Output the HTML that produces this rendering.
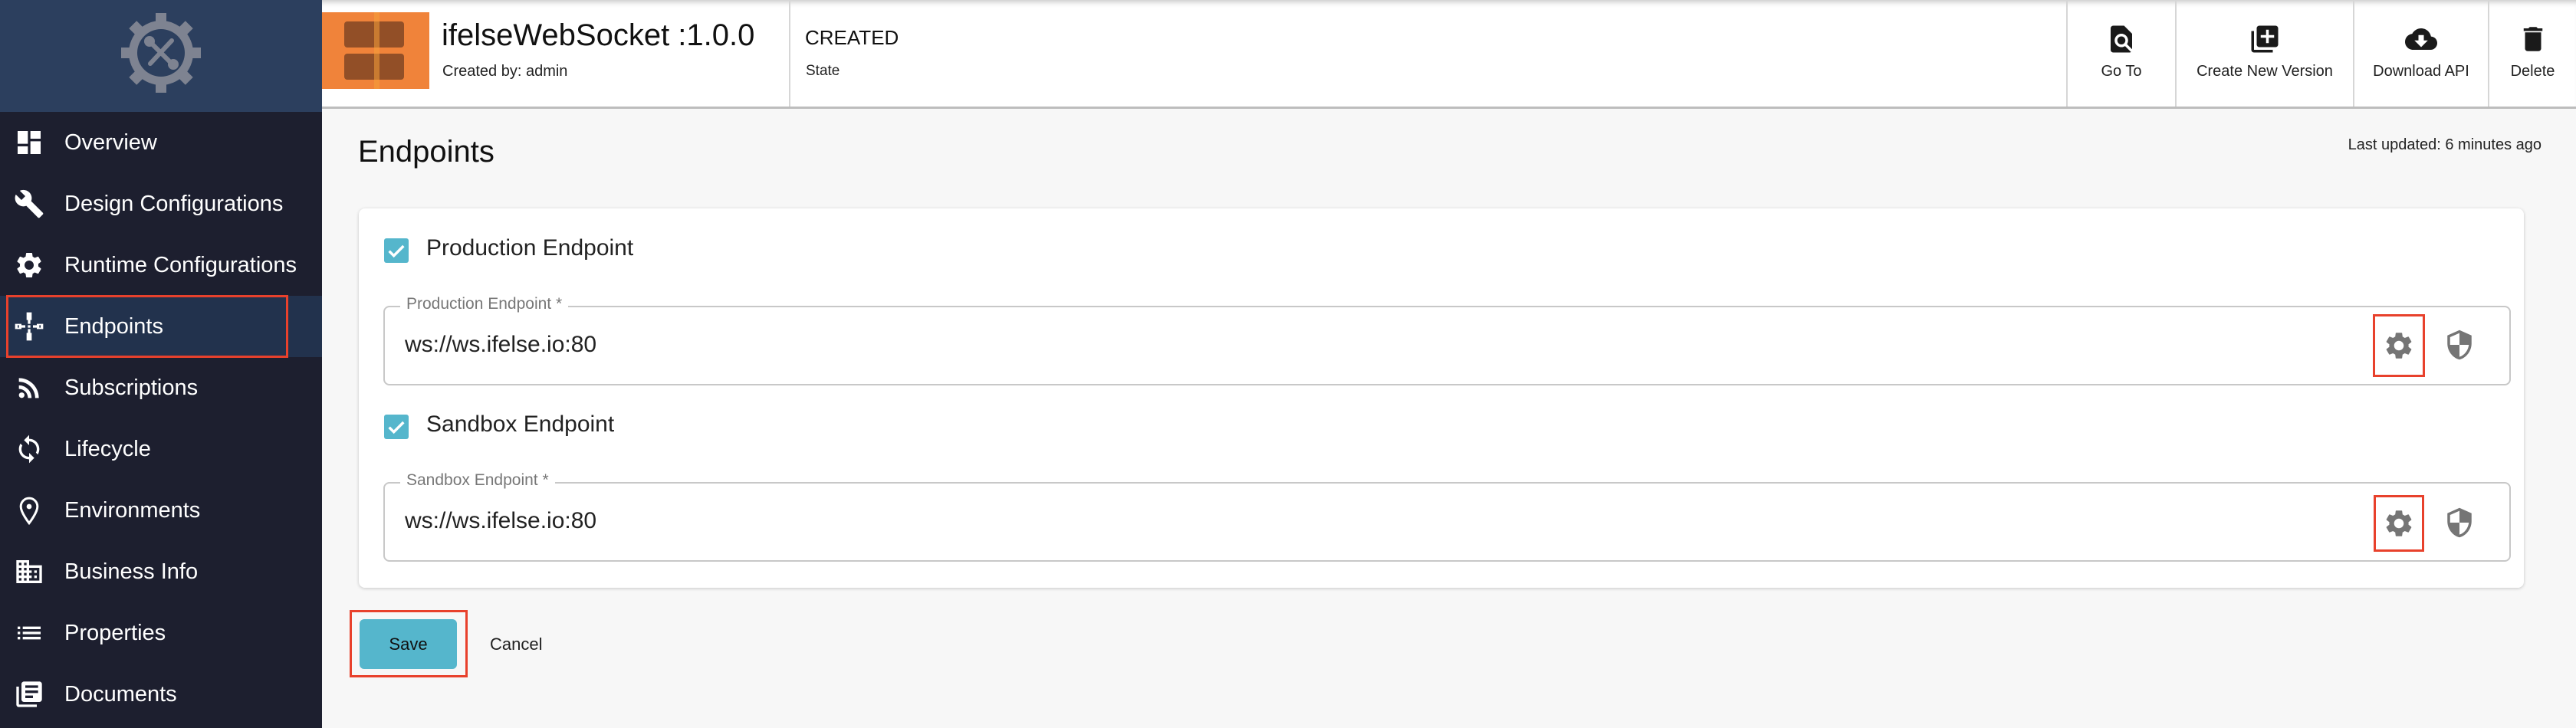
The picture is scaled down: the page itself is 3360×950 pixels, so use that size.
<!DOCTYPE html>
<html><head><meta charset="utf-8">
<style>
*{box-sizing:border-box;margin:0;padding:0}
body{width:3360px;height:950px;overflow:hidden;font-family:"Liberation Sans",sans-serif;background:#f7f7f7;position:relative;color:#222}
.abs{position:absolute}
#side{left:0;top:0;width:420px;height:950px;background:#1d1f2f}
#logo{left:0;top:0;width:420px;height:146px;background:#2c3f5e}
.nav{position:absolute;left:0;width:420px;height:80px;color:#fff;font-size:29px;line-height:80px}
.nav svg{position:absolute;left:18px;top:20px;width:40px;height:40px;fill:#fff}
.nav span{position:absolute;left:84px}
#hdr{left:420px;top:0;width:2940px;height:142px;background:#fff;border-bottom:3px solid #bdbdbd;box-shadow:inset 0 8px 8px -6px rgba(0,0,0,.25)}
.btn{position:absolute;top:0;height:139px;border-left:2px solid #d6d6d6;text-align:center;font-size:20px;color:#222}
.btn svg{position:absolute;top:30px;width:42px;height:42px;left:50%;margin-left:-21px;fill:#1a1a1a}
.btn span{position:absolute;top:82px;left:0;right:0}
#card{left:468px;top:272px;width:2824px;height:495px;background:#fff;border-radius:8px;box-shadow:0 1px 4px rgba(0,0,0,.2)}
.cb{position:absolute;width:32px;height:32px;background:#55b6cc;border-radius:3px}
.cb svg{width:32px;height:32px}
.fld{position:absolute;left:500px;width:2775px;height:104px;border:2px solid #c8c8c8;border-radius:8px}
.fld .lb{position:absolute;left:20px;top:-16px;background:#fff;padding:0 8px;font-size:21px;color:#777}
.fld .v{position:absolute;left:26px;top:32px;font-size:30px;color:#222}
.ico{position:absolute;width:42px;height:42px;fill:#757575}
.red{position:absolute;border:3px solid #e8412c}
</style></head><body>
<div id="side" class="abs"></div>
<div id="logo" class="abs">
<svg class="abs" style="left:155px;top:14px" width="110" height="110" viewBox="-55 -55 110 110">
<g fill="#7e8391">
<rect x="-7" y="-52" width="14" height="104"/><rect x="-52" y="-7" width="104" height="14"/>
<rect x="-7" y="-52" width="14" height="104" transform="rotate(45)"/><rect x="-7" y="-52" width="14" height="104" transform="rotate(-45)"/>
<circle r="42"/></g>
<circle r="31" fill="#2c3f5e"/>
<g stroke="#7e8391" stroke-width="6" stroke-linecap="round"><line x1="-14" y1="-14" x2="14" y2="14"/><line x1="14" y1="-16" x2="-14" y2="14"/></g>
<circle cx="-15" cy="-15" r="7" fill="#7e8391"/><circle cx="16" cy="15" r="7" fill="#7e8391"/>
</svg>
</div>
<div class="abs" style="left:0;top:386px;width:420px;height:80px;background:#22324d"></div>
<div class="red" style="left:8px;top:385px;width:368px;height:82px"></div>

<div class="nav" style="top:146px"><svg viewBox="0 0 24 24"><path d="M3 13h8V3H3v10zm0 8h8v-6H3v6zm10 0h8V11h-8v10zm0-18v6h8V3h-8z"/></svg><span>Overview</span></div>
<div class="nav" style="top:226px"><svg viewBox="0 0 24 24"><path d="M22.7 19l-9.1-9.1c.9-2.3.4-5-1.5-6.9-2-2-5-2.4-7.4-1.3L9 6 6 9 1.6 4.7C.4 7.1.9 10.1 2.9 12.1c1.9 1.9 4.6 2.4 6.9 1.5l9.1 9.1c.4.4 1 .4 1.4 0l2.3-2.3c.5-.4.5-1.1.1-1.4z"/></svg><span>Design Configurations</span></div>
<div class="nav" style="top:306px"><svg viewBox="0 0 24 24"><path d="M19.14 12.94c.04-.3.06-.61.06-.94 0-.32-.02-.64-.07-.94l2.03-1.58c.18-.14.23-.41.12-.61l-1.92-3.32c-.12-.22-.37-.29-.59-.22l-2.39.96c-.5-.38-1.030-.7-1.62-.94l-.36-2.54c-.04-.24-.24-.41-.48-.41h-3.84c-.24 0-.43.17-.47.41l-.36 2.54c-.59.24-1.13.57-1.62.94l-2.39-.96c-.22-.08-.47 0-.59.22L2.74 8.87c-.12.21-.08.47.12.61l2.03 1.58c-.05.3-.09.63-.09.94s.02.64.07.94l-2.030 1.58c-.18.14-.23.41-.12.61l1.92 3.32c.12.22.37.29.59.22l2.39-.96c.5.38 1.03.7 1.62.94l.36 2.54c.05.24.24.41.48.41h3.84c.24 0 .44-.17.47-.41l.36-2.54c.59-.24 1.13-.56 1.62-.94l2.39.96c.22.08.47 0 .59-.22l1.92-3.32c.12-.22.07-.47-.12-.61l-2.01-1.58zM12 15.6c-1.98 0-3.6-1.62-3.6-3.6s1.62-3.6 3.6-3.6 3.6 1.62 3.6 3.6-1.62 3.6-3.6 3.6z"/></svg><span>Runtime Configurations</span></div>
<div class="nav" style="top:386px"><svg viewBox="0 0 24 24"><path d="M10 1h4v6h-1v3h-2V7h-1zM10 17h4v6h-4v-6zm1-3h2v3h-2zM1 10h5v4H1zm2 1v2h1v-2zM18 10h5v4h-5zm2 1v2h1v-2zM6 11h3v2H6zM15 11h3v2h-3zM11 11h2v2h-2z"/></svg><span>Endpoints</span></div>
<div class="nav" style="top:466px"><svg viewBox="0 0 24 24"><circle cx="6.18" cy="17.82" r="2.18"/><path d="M4 4.44v2.83c7.03 0 12.73 5.7 12.73 12.73h2.83c0-8.59-6.97-15.56-15.56-15.56zm0 5.66v2.83c3.9 0 7.07 3.17 7.07 7.07h2.83c0-5.47-4.43-9.9-9.9-9.9z"/></svg><span>Subscriptions</span></div>
<div class="nav" style="top:546px"><svg viewBox="0 0 24 24"><path d="M12 4V1L8 5l4 4V6c3.31 0 6 2.69 6 6 0 1.01-.25 1.97-.7 2.8l1.46 1.46C19.54 15.03 20 13.57 20 12c0-4.42-3.58-8-8-8zm0 14c-3.31 0-6-2.69-6-6 0-1.01.25-1.97.7-2.8L5.24 7.74C4.46 8.97 4 10.430 4 12c0 4.42 3.58 8 8 8v3l4-4-4-4v3z"/></svg><span>Lifecycle</span></div>
<div class="nav" style="top:626px"><svg viewBox="0 0 24 24"><path d="M12 2.5c-3.6 0-6.5 2.9-6.5 6.5 0 4.8 6.5 13 6.5 13s6.5-8.2 6.5-13c0-3.6-2.9-6.5-6.5-6.5z" fill="none" stroke="#fff" stroke-width="1.8"/><circle cx="12" cy="9" r="2"/></svg><span>Environments</span></div>
<div class="nav" style="top:706px"><svg viewBox="0 0 24 24"><path d="M12 7V3H2v18h20V7H10zM6 19H4v-2h2v2zm0-4H4v-2h2v2zm0-4H4V9h2v2zm0-4H4V5h2v2zm4 12H8v-2h2v2zm0-4H8v-2h2v2zm0-4H8V9h2v2zm0-4H8V5h2v2zm10 12h-8v-2h2v-2h-2v-2h2v-2h-2V9h8v10zm-2-8h-2v2h2v-2zm0 4h-2v2h2v-2z"/></svg><span>Business Info</span></div>
<div class="nav" style="top:786px"><svg viewBox="0 0 24 24"><path d="M3 13h2v-2H3v2zm0 4h2v-2H3v2zm0-8h2V7H3v2zm4 4h14v-2H7v2zm0 4h14v-2H7v2zM7 7v2h14V7H7z"/></svg><span>Properties</span></div>
<div class="nav" style="top:866px"><svg viewBox="0 0 24 24"><path d="M4 6H2v14c0 1.1.9 2 2 2h14v-2H4V6zm16-4H8c-1.1 0-2 .9-2 2v12c0 1.1.9 2 2 2h12c1.1 0 2-.9 2-2V4c0-1.1-.9-2-2-2zm-1 9H9V9h10v2zm-4 4H9v-2h6v2zm4-8H9V5h10v2z"/></svg><span>Documents</span></div>

<div id="hdr" class="abs">
 <div class="abs" style="left:0;top:16px;width:140px;height:100px;background:#f0833a">
  <div class="abs" style="left:29px;top:12px;width:78px;height:34px;background:#924f27;border-radius:4px"></div>
  <div class="abs" style="left:29px;top:54px;width:78px;height:34px;background:#924f27;border-radius:4px"></div>
  <div class="abs" style="left:68px;top:0;width:7px;height:100px;background:#f5a03a;opacity:.55"></div>
 </div>
 <div class="abs" style="left:156px;top:24px;font-size:40px;color:#111">ifelseWebSocket :1.0.0</div>
 <div class="abs" style="left:157px;top:82px;font-size:20px;color:#222">Created by: admin</div>
 <div class="abs" style="left:609px;top:0;width:2px;height:139px;background:#d6d6d6"></div>
 <div class="abs" style="left:630px;top:34px;font-size:26px;color:#111">CREATED</div>
 <div class="abs" style="left:631px;top:82px;font-size:19px;color:#222">State</div>
 <div class="btn" style="left:2275px;width:142px"><svg viewBox="0 0 24 24"><path d="M20 19.59V8l-6-6H6c-1.1 0-1.99.9-1.99 2L4 20c0 1.1.89 2 1.99 2H18c.45 0 .85-.15 1.19-.38l-4.43-4.43c-.8.52-1.74.81-2.76.81-2.76 0-5-2.24-5-5s2.24-5 5-5 5 2.24 5 5c0 1.02-.31 1.96-.83 2.75L20 19.59zM9 13c0 1.66 1.34 3 3 3s3-1.34 3-3-1.34-3-3-3-3 1.34-3 3z"/></svg><span>Go To</span></div>
 <div class="btn" style="left:2417px;width:232px"><svg viewBox="0 0 24 24"><path d="M4 6H2v14c0 1.1.9 2 2 2h14v-2H4V6zm16-4H8c-1.1 0-2 .9-2 2v12c0 1.1.9 2 2 2h12c1.1 0 2-.9 2-2V4c0-1.1-.9-2-2-2zm-1 9h-4v4h-2v-4H9V9h4V5h2v4h4v2z"/></svg><span>Create New Version</span></div>
 <div class="btn" style="left:2649px;width:176px"><svg viewBox="0 0 24 24"><path d="M19.35 10.04C18.67 6.59 15.64 4 12 4 9.11 4 6.6 5.64 5.35 8.04 2.34 8.36 0 10.91 0 14c0 3.31 2.69 6 6 6h13c2.76 0 5-2.24 5-5 0-2.64-2.05-4.78-4.65-4.96zM17 13l-5 5-5-5h3V9h4v4h3z"/></svg><span>Download API</span></div>
 <div class="btn" style="left:2825px;width:115px"><svg viewBox="0 0 24 24"><path d="M6 19c0 1.1.9 2 2 2h8c1.1 0 2-.9 2-2V7H6v12zM19 4h-3.5l-1-1h-5l-1 1H5v2h14V4z"/></svg><span>Delete</span></div>
</div>

<div class="abs" style="left:467px;top:176px;font-size:40px;color:#111">Endpoints</div>
<div class="abs" style="right:45px;top:178px;font-size:20px;color:#222">Last updated: 6 minutes ago</div>

<div id="card" class="abs"></div>
<div class="cb" style="left:501px;top:311px"><svg viewBox="0 0 24 24"><path d="M5 12.5l4.5 4.5L19 7.5" fill="none" stroke="#fff" stroke-width="2.6"/></svg></div>
<div class="abs" style="left:556px;top:307px;font-size:30px;color:#222">Production Endpoint</div>
<div class="fld" style="top:399px"><div class="lb">Production Endpoint *</div><div class="v">ws://ws.ifelse.io:80</div></div>
<div class="cb" style="left:501px;top:541px"><svg viewBox="0 0 24 24"><path d="M5 12.5l4.5 4.5L19 7.5" fill="none" stroke="#fff" stroke-width="2.6"/></svg></div>
<div class="abs" style="left:556px;top:537px;font-size:30px;color:#222">Sandbox Endpoint</div>
<div class="fld" style="top:629px"><div class="lb">Sandbox Endpoint *</div><div class="v">ws://ws.ifelse.io:80</div></div>

<svg class="ico" style="left:3108px;top:430px" viewBox="0 0 24 24"><path d="M19.14 12.94c.04-.3.06-.61.06-.94 0-.32-.02-.64-.07-.94l2.03-1.58c.18-.14.23-.41.12-.61l-1.92-3.32c-.12-.22-.37-.29-.59-.22l-2.39.96c-.5-.38-1.03-.7-1.62-.94l-.36-2.54c-.04-.24-.24-.41-.48-.41h-3.84c-.24 0-.43.17-.47.41l-.36 2.54c-.59.24-1.13.57-1.62.94l-2.39-.96c-.22-.08-.47 0-.59.22L2.74 8.87c-.12.21-.08.47.12.61l2.03 1.58c-.05.3-.09.63-.09.94s.02.64.07.94l-2.03 1.58c-.18.14-.23.41-.12.61l1.92 3.32c.12.22.37.29.59.22l2.39-.96c.5.38 1.03.7 1.62.94l.36 2.54c.05.24.24.41.48.41h3.84c.24 0 .44-.17.47-.41l.36-2.54c.59-.24 1.13-.56 1.62-.94l2.39.96c.22.08.47 0 .59-.22l1.92-3.32c.12-.22.07-.47-.12-.61l-2.01-1.58zM12 15.6c-1.98 0-3.6-1.62-3.6-3.6s1.62-3.6 3.6-3.6 3.6 1.62 3.6 3.6-1.62 3.6-3.6 3.6z"/></svg>
<svg class="ico" style="left:3187px;top:429px" viewBox="0 0 24 24"><path d="M12 1L3 5v6c0 5.55 3.84 10.74 9 12 5.16-1.26 9-6.45 9-12V5l-9-4zm0 10.99h7c-.53 4.12-3.28 7.79-7 8.94V12H5V6.3l7-3.11v8.8z"/></svg>
<div class="red" style="left:3095px;top:410px;width:68px;height:82px"></div>
<svg class="ico" style="left:3108px;top:662px" viewBox="0 0 24 24"><path d="M19.14 12.94c.04-.3.06-.61.06-.94 0-.32-.02-.64-.07-.94l2.03-1.58c.18-.14.23-.41.12-.61l-1.92-3.32c-.12-.22-.37-.29-.59-.22l-2.39.96c-.5-.38-1.03-.7-1.62-.94l-.36-2.54c-.04-.24-.24-.41-.48-.41h-3.84c-.24 0-.43.17-.47.41l-.36 2.54c-.59.24-1.13.57-1.62.94l-2.39-.96c-.22-.08-.47 0-.59.22L2.74 8.87c-.12.21-.08.47.12.61l2.03 1.58c-.05.3-.09.63-.09.94s.02.64.07.94l-2.03 1.58c-.18.14-.23.41-.12.61l1.920 3.32c.12.22.37.29.59.22l2.39-.96c.5.38 1.03.7 1.62.94l.36 2.54c.05.24.24.41.48.41h3.84c.24 0 .44-.17.47-.41l.36-2.54c.59-.24 1.13-.56 1.62-.94l2.39.96c.22.08.47 0 .59-.22l1.92-3.32c.12-.22.07-.47-.12-.61l-2.01-1.58zM12 15.6c-1.98 0-3.6-1.62-3.6-3.6s1.62-3.6 3.6-3.6 3.6 1.62 3.6 3.6-1.62 3.6-3.6 3.6z"/></svg>
<svg class="ico" style="left:3187px;top:661px" viewBox="0 0 24 24"><path d="M12 1L3 5v6c0 5.55 3.84 10.74 9 12 5.16-1.26 9-6.450 9-12V5l-9-4zm0 10.99h7c-.53 4.12-3.28 7.79-7 8.94V12H5V6.3l7-3.11v8.8z"/></svg>
<div class="red" style="left:3096px;top:646px;width:66px;height:74px"></div>

<div class="abs" style="left:469px;top:808px;width:127px;height:65px;background:#55b6cc;border-radius:6px;font-size:22px;line-height:65px;text-align:center;color:#111">Save</div>
<div class="red" style="left:456px;top:796px;width:154px;height:88px"></div>
<div class="abs" style="left:639px;top:828px;font-size:22px;color:#222">Cancel</div>
</body></html>
